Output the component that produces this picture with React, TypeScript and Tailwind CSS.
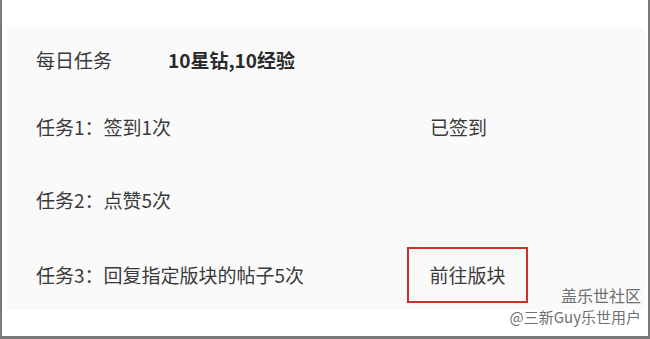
export default function App() {
  const font = { fontFamily: '"Noto Sans CJK SC", "Noto Sans", sans-serif' };
  return (
    <div
      className="relative w-[650px] h-[339px] bg-white border-l-2 border-r-2 border-b-[3px] border-[#7a7a7a] pt-[27px] pl-[5px] pr-[3px] text-[#3a3a3a]"
      style={font}
    >
      <div className="h-[283px] bg-[#fafafa] pl-[29px] pt-[15px] text-[19px] leading-[24px]">
        <div className="flex items-center h-[36px]">
          <span className="w-[132px]">每日任务</span>
          <span className="font-bold text-[#2a2a2a]">10星钻,10经验</span>
        </div>
        <div className="flex items-center h-[36px] mt-[31px]">
          <span className="w-[394px]">任务1：签到1次</span>
          <span>已签到</span>
        </div>
        <div className="flex items-center h-[36px] mt-[37px]">
          <span>任务2：点赞5次</span>
        </div>
        <div className="flex items-center h-[56px] mt-[29px]">
          <span className="w-[371px]">任务3：回复指定版块的帖子5次</span>
          <span className="h-[56px] w-[121px] flex items-center justify-center border-2 border-[#cc3128]">
            前往版块
          </span>
        </div>
      </div>
      <div className="absolute right-[7px] bottom-[10px] flex flex-col items-end gap-[2px] text-[#707070] leading-[19px]">
        <span className="text-[16px]">盖乐世社区</span>
        <span className="text-[15px]">@三新Guy乐世用户</span>
      </div>
    </div>
  );
}
